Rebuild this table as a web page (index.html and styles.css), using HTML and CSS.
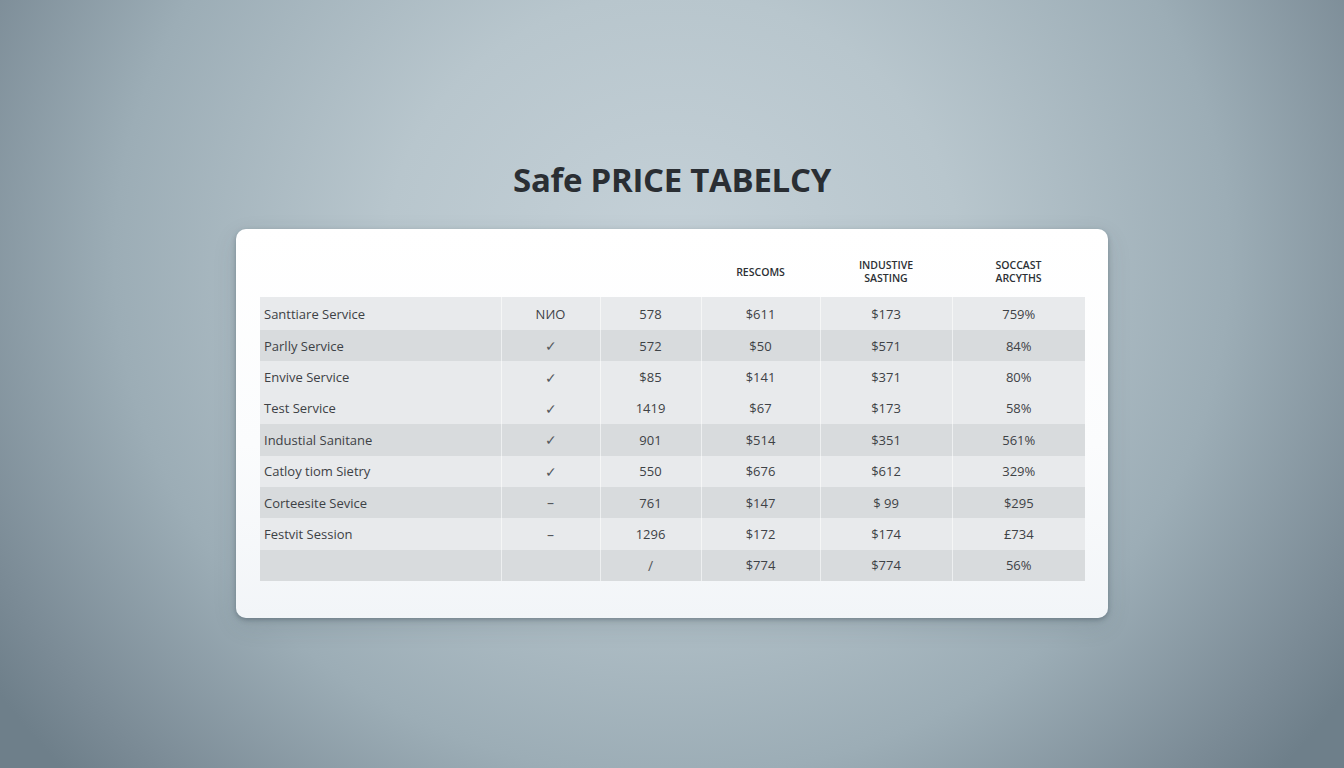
FILE: index.html
```html
<!DOCTYPE html>
<html lang="en">
<head>
<meta charset="utf-8">
<title>Safe PRICE TABELCY</title>
<link rel="stylesheet" href="styles.css">
</head>
<body>
<main class="page">
  <h1 class="title">Safe PRICE TABELCY</h1>
  <section class="card">
    <table class="price-table">
      <colgroup>
        <col class="c-name"><col class="c-a"><col class="c-b"><col class="c-c"><col class="c-d"><col class="c-e">
      </colgroup>
      <thead>
        <tr>
          <th></th><th></th><th></th>
          <th>RESCOMS</th>
          <th>INDUSTIVE<br>SASTING</th>
          <th>SOCCAST<br>ARCYTHS</th>
        </tr>
      </thead>
      <tbody>
        <tr class="light first"><td class="name">Santtiare Service</td><td>NИO</td><td>578</td><td>$611</td><td>$173</td><td>759%</td></tr>
        <tr class="dark"><td class="name">Parlly Service</td><td class="mark">✓</td><td>572</td><td>$50</td><td>$571</td><td>84%</td></tr>
        <tr class="light"><td class="name">Envive Service</td><td class="mark">✓</td><td>$85</td><td>$141</td><td>$371</td><td>80%</td></tr>
        <tr class="light"><td class="name">Test Service</td><td class="mark">✓</td><td>1419</td><td>$67</td><td>$173</td><td>58%</td></tr>
        <tr class="dark"><td class="name">Industial Sanitane</td><td class="mark">✓</td><td>901</td><td>$514</td><td>$351</td><td>561%</td></tr>
        <tr class="light"><td class="name">Catloy tiom Sietry</td><td class="mark">✓</td><td>550</td><td>$676</td><td>$612</td><td>329%</td></tr>
        <tr class="dark"><td class="name">Corteesite Sevice</td><td class="mark">–</td><td>761</td><td>$147</td><td>$ 99</td><td>$295</td></tr>
        <tr class="light"><td class="name">Festvit Session</td><td class="mark">–</td><td>1296</td><td>$172</td><td>$174</td><td>£734</td></tr>
        <tr class="dark"><td class="name"></td><td></td><td class="mark">/</td><td>$774</td><td>$774</td><td>56%</td></tr>
      </tbody>
    </table>
  </section>
</main>
</body>
</html>
```

FILE: styles.css
```css
html, body {
  margin: 0;
  padding: 0;
  height: 768px;
  overflow: hidden;
}

body {
  background:
    radial-gradient(ellipse 820px 760px at 672px 260px, #c5d1d8 0%, #b8c6cd 35%, #9cadb6 68%, #7a8a95 92%, #6e7f8a 100%);
  background-color: #6c7d88;
  font-family: "Open Sans", "Liberation Sans", sans-serif;
}

.page {
  display: flex;
  flex-direction: column;
  align-items: center;
  padding-top: 162px;
}

.title {
  margin: 0 0 31px;
  font-family: "Open Sans", "Liberation Sans", sans-serif;
  font-weight: 700;
  font-size: 33px;
  line-height: 36px;
  color: #2a2e33;
  letter-spacing: -0.3px;
}

.card {
  width: 872px;
  box-sizing: border-box;
  padding: 21px 23px 37px 24px;
  background: linear-gradient(180deg, #ffffff 0%, #fbfcfd 55%, #f2f5f8 100%);
  border-radius: 10px;
  box-shadow: 0 2px 5px rgba(40, 55, 65, 0.35), 0 8px 24px rgba(40, 55, 65, 0.12);
}

.price-table {
  width: 825px;
  border-collapse: collapse;
  table-layout: fixed;
  font-family: "Open Sans", "Liberation Sans", sans-serif;
}

.c-name { width: 241px; }
.c-a { width: 99px; }
.c-b { width: 101px; }
.c-c { width: 119px; }
.c-d { width: 132px; }
.c-e { width: 133px; }

.price-table th {
  height: 44px;
  padding: 0 0 3px;
  font-size: 10.5px;
  line-height: 13px;
  font-weight: 600;
  color: #2c3034;
  text-align: center;
  vertical-align: middle;
}

.price-table td {
  height: 31.4px;
  padding: 0;
  font-size: 13px;
  color: #3e4246;
  text-align: center;
  vertical-align: middle;
  border-left: 1px solid rgba(255, 255, 255, 0.55);
}

.price-table td.name {
  text-align: left;
  padding-left: 4px;
  border-left: none;
  color: #3d4145;
}

.price-table tr.first td {
  height: 33px;
}

.price-table td.mark {
  font-size: 14px;
  color: #54585c;
}

tr.light td { background: #e8eaec; }
tr.dark td { background: #d8dbdd; }
```
